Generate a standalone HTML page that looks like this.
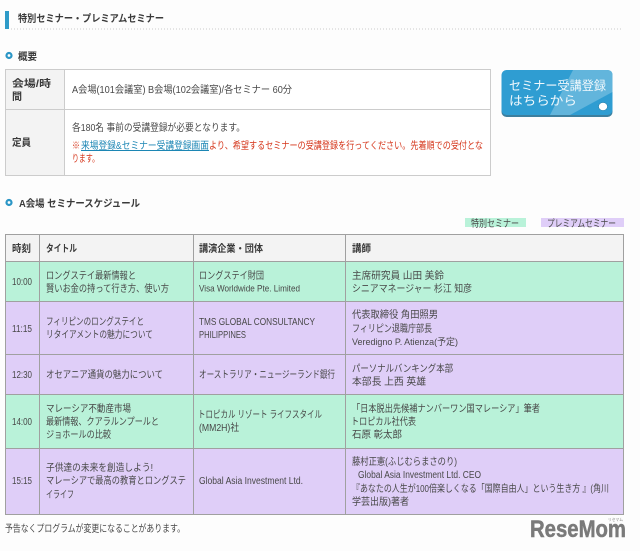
<!DOCTYPE html>
<html lang="ja"><head><meta charset="utf-8"><title>特別セミナー・プレミアムセミナー</title>
<style>
html,body{margin:0;padding:0;background:#fdfdfd}
svg{display:block;filter:blur(.3px)}
text{font-family:"Liberation Sans","Noto Sans CJK JP",sans-serif;font-size:10px;fill:#484848}
.b{font-weight:700;fill:#3a3a3a}
.s{font-size:9.5px}
.r{fill:#d5351a}
.l{fill:#1c86b4;text-decoration:underline}
</style></head><body>
<svg width="640" height="551" viewBox="0 0 640 551" xmlns="http://www.w3.org/2000/svg" lengthAdjust="spacingAndGlyphs">
<rect width="640" height="551" fill="#fdfdfd"/>
<rect x="5" y="11" width="4" height="18" fill="#2f9bc8"/>
<line x1="11" y1="29" x2="622" y2="29" stroke="#ccc" stroke-dasharray="1 2"/>
<text class="b" x="18" y="22" textLength="146" lengthAdjust="spacingAndGlyphs">特別セミナー・プレミアムセミナー</text>

<circle cx="9" cy="55.500" r="2.500" fill="#fff" stroke="#2b96c6" stroke-width="2.200"/>
<text class="b" x="18" y="60" textLength="19" lengthAdjust="spacingAndGlyphs">概要</text>

<rect x="5.500" y="69.500" width="485" height="106" fill="#fff" stroke="#ccc"/>
<rect x="6" y="70" width="58" height="105" fill="#f3f3f3"/>
<line x1="64.500" y1="70" x2="64.500" y2="175" stroke="#ccc"/>
<line x1="6" y1="109.500" x2="490" y2="109.500" stroke="#ccc"/>
<text class="b" x="12" y="87" textLength="39" lengthAdjust="spacingAndGlyphs">会場/時</text>
<text class="b" x="12" y="100" textLength="10" lengthAdjust="spacingAndGlyphs">間</text>
<text class="b" x="12" y="146" textLength="19" lengthAdjust="spacingAndGlyphs">定員</text>
<text x="72" y="93" textLength="220" lengthAdjust="spacingAndGlyphs">A会場(101会議室) B会場(102会議室)/各セミナー 60分</text>
<text x="72" y="131" textLength="173" lengthAdjust="spacingAndGlyphs">各180名 事前の受講登録が必要となります。</text>
<text class="r" x="72" y="149" textLength="8" lengthAdjust="spacingAndGlyphs">※</text>
<text class="l" x="81" y="149" textLength="128" lengthAdjust="spacingAndGlyphs">来場登録&amp;セミナー受講登録画面</text>
<text class="r" x="209" y="149" textLength="274" lengthAdjust="spacingAndGlyphs">より、希望するセミナーの受講登録を行ってください。先着順での受付とな</text>
<text class="r" x="72" y="162" textLength="27" lengthAdjust="spacingAndGlyphs">ります。</text>

<rect x="501.500" y="71" width="111" height="46" rx="5" fill="#3d7f9e"/>
<rect x="501.500" y="70" width="111" height="45" rx="5" fill="#2f9dd2"/>
<path d="M573 70H607Q612.500 70 612.500 75V92L570 115H550Z" fill="#62b5dc"/>
<ellipse cx="603" cy="106.500" rx="4.500" ry="4" fill="#fff" stroke="#2a7fa8" stroke-width=".6"/>
<text x="509" y="90" textLength="97" lengthAdjust="spacingAndGlyphs" style="font-size:12.500px;fill:#f0f8fc">セミナー受講登録</text>
<text x="509" y="105" textLength="68" lengthAdjust="spacingAndGlyphs" style="font-size:12.500px;fill:#f0f8fc">はちらから</text>

<circle cx="9" cy="202.500" r="2.500" fill="#fff" stroke="#2b96c6" stroke-width="2.200"/>
<text class="b" x="19" y="207" textLength="121" lengthAdjust="spacingAndGlyphs">A会場 セミナースケジュール</text>

<rect x="465" y="218" width="61" height="9" fill="#b9f2d9"/>
<rect x="541" y="218" width="83" height="9" fill="#dfcef8"/>
<text x="471" y="227" textLength="48" lengthAdjust="spacingAndGlyphs">特別セミナー</text>
<text x="547" y="227" textLength="69" lengthAdjust="spacingAndGlyphs">プレミアムセミナー</text>

<rect x="5" y="234" width="619" height="28" fill="#f3f3f3"/>
<rect x="5" y="262" width="619" height="39" fill="#b9f2d9"/>
<rect x="5" y="301" width="619" height="93" fill="#dfcef8"/>
<rect x="5" y="394" width="619" height="54" fill="#b9f2d9"/>
<rect x="5" y="448" width="619" height="66" fill="#dfcef8"/>
<g stroke="#a0a0a0" fill="none">
<rect x="5.500" y="234.500" width="618" height="280"/>
<path d="M39.500 234V514M193.500 234V514M345.500 234V514M5 261.500H624M5 301.500H624M5 354.500H624M5 394.500H624M5 448.500H624"/>
</g>

<text class="b" x="12" y="252" textLength="19" lengthAdjust="spacingAndGlyphs">時刻</text>
<text class="b" x="46" y="252" textLength="31" lengthAdjust="spacingAndGlyphs">タイトル</text>
<text class="b" x="199" y="252" textLength="64" lengthAdjust="spacingAndGlyphs">講演企業・団体</text>
<text class="b" x="352" y="252" textLength="19" lengthAdjust="spacingAndGlyphs">講師</text>

<text x="12" y="285" textLength="20" lengthAdjust="spacingAndGlyphs">10:00</text>
<text x="46" y="279" textLength="90" lengthAdjust="spacingAndGlyphs">ロングステイ最新情報と</text>
<text x="46" y="292" textLength="123" lengthAdjust="spacingAndGlyphs">賢いお金の持って行き方、使い方</text>
<text x="199" y="279" textLength="65" lengthAdjust="spacingAndGlyphs">ロングステイ財団</text>
<text class="s" x="199" y="291.500" textLength="101" lengthAdjust="spacingAndGlyphs">Visa Worldwide Pte. Limited</text>
<text x="352" y="279" textLength="92" lengthAdjust="spacingAndGlyphs">主席研究員 山田 美鈴</text>
<text x="352" y="292" textLength="120" lengthAdjust="spacingAndGlyphs">シニアマネージャー 杉江 知彦</text>

<text x="12" y="332" textLength="20" lengthAdjust="spacingAndGlyphs">11:15</text>
<text x="46" y="325" textLength="98" lengthAdjust="spacingAndGlyphs">フィリピンのロングステイと</text>
<text x="46" y="338" textLength="107" lengthAdjust="spacingAndGlyphs">リタイアメントの魅力について</text>
<text x="199" y="325" textLength="116" lengthAdjust="spacingAndGlyphs">TMS GLOBAL CONSULTANCY</text>
<text x="199" y="338" textLength="47" lengthAdjust="spacingAndGlyphs">PHILIPPINES</text>
<text x="352" y="318" textLength="86" lengthAdjust="spacingAndGlyphs">代表取締役 角田照男</text>
<text x="352" y="332" textLength="80" lengthAdjust="spacingAndGlyphs">フィリピン退職庁部長</text>
<text class="s" x="352" y="345" textLength="106" lengthAdjust="spacingAndGlyphs">Veredigno P. Atienza(予定)</text>

<text x="12" y="378" textLength="20" lengthAdjust="spacingAndGlyphs">12:30</text>
<text x="46" y="378" textLength="117" lengthAdjust="spacingAndGlyphs">オセアニア通貨の魅力について</text>
<text x="199" y="378" textLength="136" lengthAdjust="spacingAndGlyphs">オーストラリア・ニュージーランド銀行</text>
<text x="352" y="372" textLength="101" lengthAdjust="spacingAndGlyphs">パーソナルバンキング本部</text>
<text x="352" y="385" textLength="74" lengthAdjust="spacingAndGlyphs">本部長 上西 英雄</text>

<text x="12" y="425" textLength="20" lengthAdjust="spacingAndGlyphs">14:00</text>
<text x="46" y="412" textLength="85" lengthAdjust="spacingAndGlyphs">マレーシア不動産市場</text>
<text x="46" y="425" textLength="113" lengthAdjust="spacingAndGlyphs">最新情報、クアラルンプールと</text>
<text x="46" y="438" textLength="65" lengthAdjust="spacingAndGlyphs">ジョホールの比較</text>
<text x="198" y="418" textLength="124" lengthAdjust="spacingAndGlyphs">トロピカル リゾート ライフスタイル</text>
<text x="199" y="431" textLength="40" lengthAdjust="spacingAndGlyphs">(MM2H)社</text>
<text x="352" y="412" textLength="188" lengthAdjust="spacingAndGlyphs">「日本脱出先候補ナンバーワン国マレーシア」筆者</text>
<text x="351" y="425" textLength="65" lengthAdjust="spacingAndGlyphs">トロピカル社代表</text>
<text x="352" y="438" textLength="50" lengthAdjust="spacingAndGlyphs">石原 彰太郎</text>

<text x="12" y="484" textLength="20" lengthAdjust="spacingAndGlyphs">15:15</text>
<text x="46" y="471" textLength="107" lengthAdjust="spacingAndGlyphs">子供達の未来を創造しよう!</text>
<text x="46" y="484" textLength="140" lengthAdjust="spacingAndGlyphs">マレーシアで最高の教育とロングステ</text>
<text x="46" y="498" textLength="28" lengthAdjust="spacingAndGlyphs">イライフ</text>
<text x="199" y="484" textLength="104" lengthAdjust="spacingAndGlyphs">Global Asia Investment Ltd.</text>
<text x="352" y="465" textLength="105" lengthAdjust="spacingAndGlyphs">藤村正憲(ふじむらまさのり)</text>
<text x="358" y="478" textLength="123" lengthAdjust="spacingAndGlyphs">Global Asia Investment Ltd. CEO</text>
<text x="352" y="492" textLength="257" lengthAdjust="spacingAndGlyphs">『あなたの人生が100倍楽しくなる「国際自由人」という生き方 』(角川</text>
<text x="352" y="505" textLength="57" lengthAdjust="spacingAndGlyphs">学芸出版)著者</text>

<text x="5" y="532" textLength="180" lengthAdjust="spacingAndGlyphs">予告なくプログラムが変更になることがあります。</text>

<text x="530" y="537" textLength="96" lengthAdjust="spacingAndGlyphs" style="font-size:24px;font-weight:700;fill:#7a7a7a;stroke:#7a7a7a;stroke-width:.5px">ReseMom</text>
<text x="608" y="521" textLength="15" lengthAdjust="spacingAndGlyphs" style="font-size:4px;fill:#888">リセマム</text>
</svg>
</body></html>
